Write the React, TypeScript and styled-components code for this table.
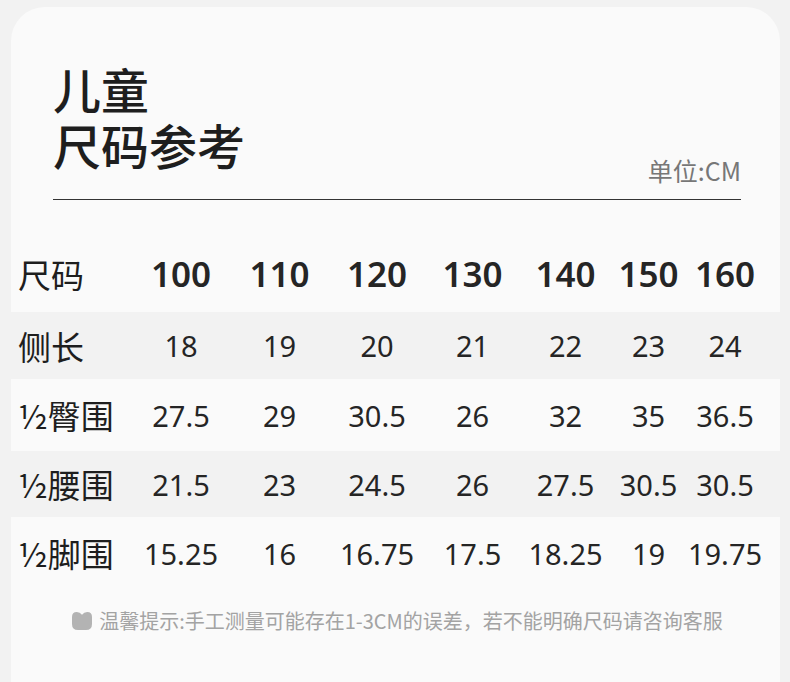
import React from 'react';
import styled, { createGlobalStyle } from 'styled-components';

const sizes = ['100', '110', '120', '130', '140', '150', '160'];

const rows = [
  { label: '侧长', values: ['18', '19', '20', '21', '22', '23', '24'], shaded: true, height: 67 },
  { label: '½臀围', values: ['27.5', '29', '30.5', '26', '32', '35', '36.5'], shaded: false, height: 72 },
  { label: '½腰围', values: ['21.5', '23', '24.5', '26', '27.5', '30.5', '30.5'], shaded: true, height: 66 },
  { label: '½脚围', values: ['15.25', '16', '16.75', '17.5', '18.25', '19', '19.75'], shaded: false, height: 72 },
];

const GlobalStyle = createGlobalStyle`
  html, body {
    margin: 0;
    padding: 0;
    background: #f2f2f2;
  }
  body {
    font-family: "Noto Sans", "Noto Sans CJK SC", sans-serif;
    color: #222222;
  }
`;

const SizeChart: React.FC = () => {
  return (
    <>
      <GlobalStyle />
      <Page>
        <Card>
          <Header>
            <Title>
              儿童
              <br />
              尺码参考
            </Title>
            <Unit>单位:CM</Unit>
          </Header>

          <Table>
            <Row height={77}>
              <Label>尺码</Label>
              {sizes.map((s) => (
                <HeadCell key={s}>{s}</HeadCell>
              ))}
            </Row>
            {rows.map((r) => (
              <Row key={r.label} shaded={r.shaded} height={r.height}>
                <Label>{r.label}</Label>
                {r.values.map((v, i) => (
                  <Cell key={i}>{v}</Cell>
                ))}
              </Row>
            ))}
          </Table>

          <Notice>
            <NoticeIcon width='20' height='18' viewBox='0 0 20 18'>
              <path
                d='M0 5 Q0 0 4.8 0 Q8 0 10 2.8 Q12 0 15.2 0 Q20 0 20 5 L20 12 Q20 18 14 18 L6 18 Q0 18 0 12 Z'
                fill='#b3b3b3'
              />
            </NoticeIcon>
            温馨提示:手工测量可能存在1-3CM的误差，若不能明确尺码请咨询客服
          </Notice>
        </Card>
      </Page>
    </>
  );
};

export default SizeChart;

const Page = styled.div`
  width: 790px;
  height: 682px;
  overflow: hidden;
  padding: 7px 10px 0 11px;
  box-sizing: border-box;
`;

const Card = styled.div`
  width: 769px;
  min-height: 700px;
  background: #fafafa;
  border-radius: 34px 34px 0 0;
  padding-top: 53px;
  box-sizing: border-box;
`;

const Header = styled.div`
  display: flex;
  justify-content: space-between;
  align-items: flex-end;
  margin: 0 39px 0 42px;
  padding-bottom: 14px;
  border-bottom: 1px solid #333333;
`;

const Title = styled.h1`
  margin: 0 0 13px;
  font-family: "Noto Sans CJK SC", sans-serif;
  font-weight: 500;
  font-size: 48px;
  line-height: 56px;
  color: #1e1e1e;
`;

const Unit = styled.div`
  font-family: "Noto Sans CJK SC", sans-serif;
  font-size: 25px;
  line-height: 30px;
  color: #777777;
`;

const Table = styled.div`
  margin-top: 35px;
  display: flex;
  flex-direction: column;
`;

const Row = styled.div<{ shaded?: boolean; height: number }>`
  display: grid;
  grid-template-columns: 121px 98px 99px 96px 95px 91px 75px 78px;
  align-items: center;
  height: ${(p) => p.height}px;
  background: ${(p) => (p.shaded ? '#f2f2f2' : 'transparent')};
`;

const Label = styled.div`
  padding-left: 7px;
  font-family: "Noto Sans CJK SC", sans-serif;
  font-size: 33px;
  font-weight: 400;
  color: #1e1e1e;
  white-space: nowrap;
`;

const HeadCell = styled.div`
  text-align: center;
  font-size: 35px;
  font-weight: 600;
  color: #252525;
`;

const Cell = styled.div`
  text-align: center;
  font-size: 29px;
  font-weight: 400;
  color: #252525;
`;

const Notice = styled.div`
  display: flex;
  align-items: center;
  justify-content: center;
  gap: 7px;
  margin-top: 17px;
  padding-left: 4px;
  font-family: "Noto Sans CJK SC", sans-serif;
  font-size: 20px;
  color: #a3a3a3;
`;

const NoticeIcon = styled.svg`
  flex-shrink: 0;
`;
